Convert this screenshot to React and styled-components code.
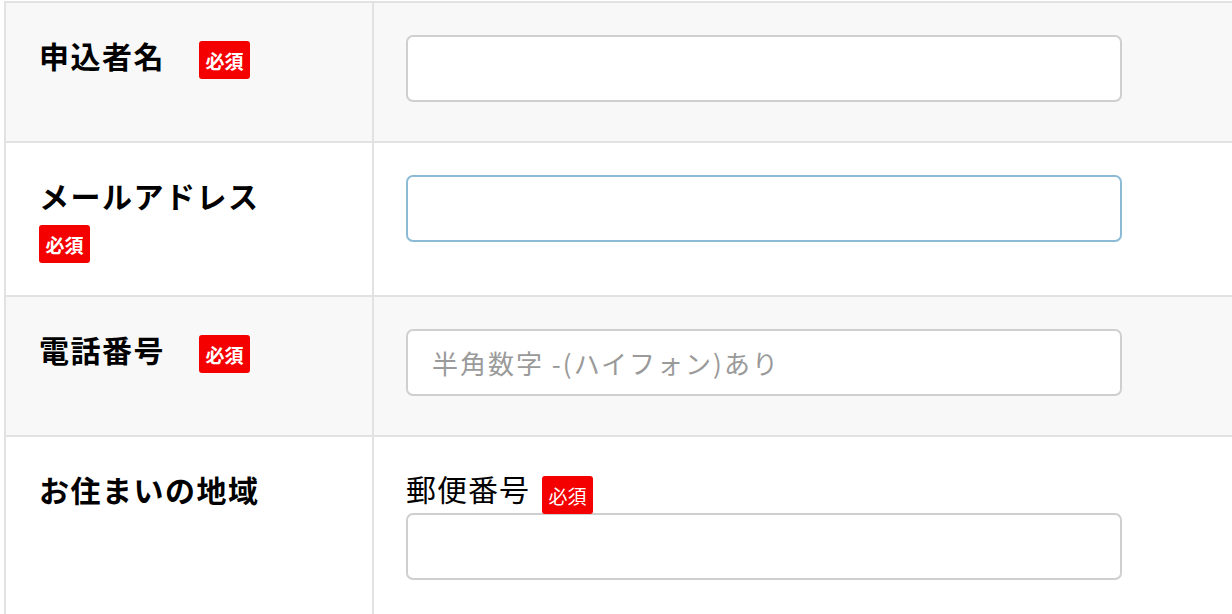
import styled, { createGlobalStyle } from "styled-components"

const GlobalStyle = createGlobalStyle`
  body {
    margin: 0;
    background: #fff;
    overflow: hidden;
    font-family: "Noto Sans CJK JP", "Noto Sans", sans-serif;
    color: #000;
  }
`

const Table = styled.div`
  margin: 1px 0 0 4px;
  width: 1260px;
  border-top: 2px solid #e2e2e2;
  border-left: 2px solid #e2e2e2;
`

const Row = styled.div`
  display: grid;
  grid-template-columns: 368px 1fr;
  background: ${(p) => (p.$shaded ? "#f8f8f8" : "#fff")};
  border-bottom: 2px solid #e2e2e2;
`

const LabelCell = styled.div`
  display: flex;
  flex-wrap: wrap;
  align-items: flex-start;
  align-content: flex-start;
  column-gap: 34px;
  row-gap: 2px;
  padding: 31px 33px 32px 33px;
  border-right: 2px solid #e2e2e2;
`

const Label = styled.span`
  font-size: 30px;
  line-height: 42px;
  font-weight: 700;
  letter-spacing: 1.5px;
`

const Badge = styled.span`
  display: inline-flex;
  align-items: center;
  justify-content: center;
  width: 51px;
  height: 38px;
  margin-top: ${(p) => (p.$top ? p.$top : 7)}px;
  background: #f40000;
  color: #fff;
  border-radius: 3px;
  font-size: 19px;
  font-weight: ${(p) => (p.$light ? 400 : 700)};
`

const FieldCell = styled.div`
  padding: 32px 32px 39px 32px;
`

const SubLabelRow = styled.div`
  display: flex;
  align-items: flex-start;
  gap: 12px;
  height: 44px;
`

const SubLabel = styled.span`
  font-size: 30px;
  line-height: 39px;
  letter-spacing: 1px;
`

const Input = styled.input`
  display: block;
  box-sizing: border-box;
  width: 716px;
  height: 67px;
  padding: 0 24px;
  border: 2px solid ${(p) => (p.$focused ? "#8bbbd6" : "#cfcfcf")};
  border-radius: 7px;
  background: #fff;
  font-family: inherit;
  font-size: 26px;
  outline: none;

  &::placeholder {
    color: #9a9a9a;
    letter-spacing: 2px;
  }
`

function App() {
    return (
        <>
            <GlobalStyle />
            <Table>
                <Row $shaded>
                    <LabelCell>
                        <Label>申込者名</Label>
                        <Badge>必須</Badge>
                    </LabelCell>
                    <FieldCell>
                        <Input type="text" />
                    </FieldCell>
                </Row>
                <Row>
                    <LabelCell>
                        <Label>メールアドレス</Label>
                        <Badge>必須</Badge>
                    </LabelCell>
                    <FieldCell>
                        <Input type="email" $focused />
                    </FieldCell>
                </Row>
                <Row $shaded>
                    <LabelCell>
                        <Label>電話番号</Label>
                        <Badge>必須</Badge>
                    </LabelCell>
                    <FieldCell>
                        <Input type="tel" placeholder="半角数字 -(ハイフォン)あり" />
                    </FieldCell>
                </Row>
                <Row>
                    <LabelCell>
                        <Label>お住まいの地域</Label>
                    </LabelCell>
                    <FieldCell>
                        <SubLabelRow>
                            <SubLabel>郵便番号</SubLabel>
                            <Badge $light $top={7}>必須</Badge>
                        </SubLabelRow>
                        <Input type="text" />
                    </FieldCell>
                </Row>
            </Table>
        </>
    )
}

export default App
